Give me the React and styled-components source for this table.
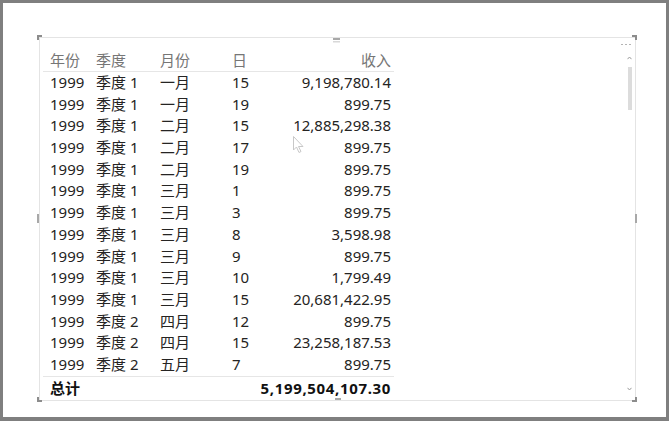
import React from "react";
import styled, { createGlobalStyle } from "styled-components";

const Global = createGlobalStyle`
  html, body { margin: 0; padding: 0; background: #fff; }
  body { font-family: "Noto Sans", "Noto Sans CJK SC", sans-serif; }
`;

const Frame = styled.div`
  box-sizing: border-box;
  width: 669px;
  height: 421px;
  border-style: solid;
  border-color: #7f7f7f;
  border-width: 3px 3px 4px 3px;
  background: #fff;
  padding: 34px 0 0 36px;
`;

const Visual = styled.div`
  position: relative;
  box-sizing: border-box;
  width: 597px;
  height: 364px;
  border: 1px solid #e4e4e4;
  display: flex;
  padding: 0 3px;
`;

const Handles = styled.svg`
  position: absolute;
  left: -3px;
  top: -3px;
  pointer-events: none;
`;

const Table = styled.div`
  align-self: flex-start;
  margin-top: 11px;
  width: 351px;
  display: grid;
  grid-template-columns: 46px 64px 72px 30px minmax(0, 1fr);
  font-size: 15px;
  color: #252423;
`;

const HeadCell = styled.div`
  height: 22px;
  line-height: 22px;
  color: #767676;
  padding-left: ${(p) => (p.$right ? "0" : "7px")};
  padding-right: ${(p) => (p.$right ? "3px" : "0")};
  text-align: ${(p) => (p.$right ? "right" : "left")};
  border-bottom: 1px solid #e6e6e6;
  white-space: nowrap;
`;

const Cell = styled.div`
  height: 21.7px;
  line-height: 21.7px;
  padding-left: ${(p) => (p.$right ? "0" : "7px")};
  padding-right: ${(p) => (p.$right ? "3px" : "0")};
  text-align: ${(p) => (p.$right ? "right" : "left")};
  white-space: nowrap;
`;

const TotalCell = styled.div`
  height: 22px;
  line-height: 22px;
  font-weight: 700;
  color: #111;
  border-top: 1px solid #e6e6e6;
  padding-left: ${(p) => (p.$right ? "0" : "7px")};
  padding-right: ${(p) => (p.$right ? "3px" : "0")};
  text-align: ${(p) => (p.$right ? "right" : "left")};
  letter-spacing: ${(p) => (p.$right ? "0.65px" : "0")};
  white-space: nowrap;
`;

const ScrollColumn = styled.div`
  margin-left: auto;
  display: flex;
  flex-direction: column;
  align-items: flex-end;
`;

const Dots = styled.svg`
  display: block;
  margin-top: 6px;
  margin-right: 1px;
`;

const Arrow = styled.svg`
  display: block;
  margin-top: ${(p) => (p.$dir === "up" ? "11px" : "auto")};
  margin-bottom: ${(p) => (p.$dir === "up" ? "0" : "9px")};
`;

const Thumb = styled.div`
  margin-top: 7px;
  width: 4px;
  height: 43px;
  background: #dcdcdc;
`;

const Cursor = styled.svg`
  position: absolute;
  left: 253px;
  top: 98px;
`;

const rows = [
  ["1999", "季度 1", "一月", "15", "9,198,780.14"],
  ["1999", "季度 1", "一月", "19", "899.75"],
  ["1999", "季度 1", "二月", "15", "12,885,298.38"],
  ["1999", "季度 1", "二月", "17", "899.75"],
  ["1999", "季度 1", "二月", "19", "899.75"],
  ["1999", "季度 1", "三月", "1", "899.75"],
  ["1999", "季度 1", "三月", "3", "899.75"],
  ["1999", "季度 1", "三月", "8", "3,598.98"],
  ["1999", "季度 1", "三月", "9", "899.75"],
  ["1999", "季度 1", "三月", "10", "1,799.49"],
  ["1999", "季度 1", "三月", "15", "20,681,422.95"],
  ["1999", "季度 2", "四月", "12", "899.75"],
  ["1999", "季度 2", "四月", "15", "23,258,187.53"],
  ["1999", "季度 2", "五月", "7", "899.75"],
];

const headers = ["年份", "季度", "月份", "日", "收入"];

const W = 600;
const H = 367;

export default function App() {
  return (
    <>
      <Global />
      <Frame>
        <Visual>
          <Handles width={W} height={H} viewBox={`0 0 ${W} ${H}`}>
            <g fill="#8c8c8c">
              <rect x="0" y="0" width="5" height="2" />
              <rect x="0" y="0" width="2" height="5" />
              <rect x={W - 5} y="0" width="5" height="2" />
              <rect x={W - 2} y="0" width="2" height="5" />
              <rect x="0" y={H - 2} width="5" height="2" />
              <rect x="0" y={H - 5} width="2" height="5" />
              <rect x={W - 5} y={H - 2} width="5" height="2" />
              <rect x={W - 2} y={H - 5} width="2" height="5" />
            </g>
            <g fill="#a8a8a8">
              <rect x="296" y="3" width="7" height="2" />
              <rect x="298" y="363" width="6" height="2" />
              <rect x="0" y="179" width="2" height="9" />
              <rect x={W - 2} y="179" width="2" height="9" />
            </g>
            <rect x="296" y="6" width="7" height="1.5" fill="#d8d8d8" />
          </Handles>
          <Table>
            {headers.map((h, i) => (
              <HeadCell key={h} $right={i === 4}>{h}</HeadCell>
            ))}
            {rows.map((r, ri) =>
              r.map((c, ci) => (
                <Cell key={ri + "-" + ci} $right={ci === 4}>{c}</Cell>
              ))
            )}
            <TotalCell>总计</TotalCell>
            <TotalCell />
            <TotalCell />
            <TotalCell />
            <TotalCell $right>5,199,504,107.30</TotalCell>
          </Table>
          <ScrollColumn>
            <Dots width="10" height="1" viewBox="0 0 10 1">
              <g fill="#b4b4b4">
                <rect x="0" y="0" width="2" height="1" />
                <rect x="4" y="0" width="2" height="1" />
                <rect x="8" y="0" width="2" height="1" />
              </g>
            </Dots>
            <Arrow $dir="up" width="5" height="4" viewBox="0 0 5 4">
              <path d="M0.5 3.2 L2.5 1 L4.5 3.2" fill="none" stroke="#9a9a9a" strokeWidth="1" />
            </Arrow>
            <Thumb />
            <Arrow $dir="down" width="5" height="4" viewBox="0 0 5 4">
              <path d="M0.5 0.8 L2.5 3 L4.5 0.8" fill="none" stroke="#9a9a9a" strokeWidth="1" />
            </Arrow>
          </ScrollColumn>
          <Cursor width="12" height="18" viewBox="0 0 12 18">
            <path d="M0.5 0.5 L0.5 14 L3.5 11 L6 16.5 L8 15.5 L5.5 10.5 L10 10.5 Z" fill="#fff" stroke="#c8c8c8" strokeWidth="1" />
          </Cursor>
        </Visual>
      </Frame>
    </>
  );
}
